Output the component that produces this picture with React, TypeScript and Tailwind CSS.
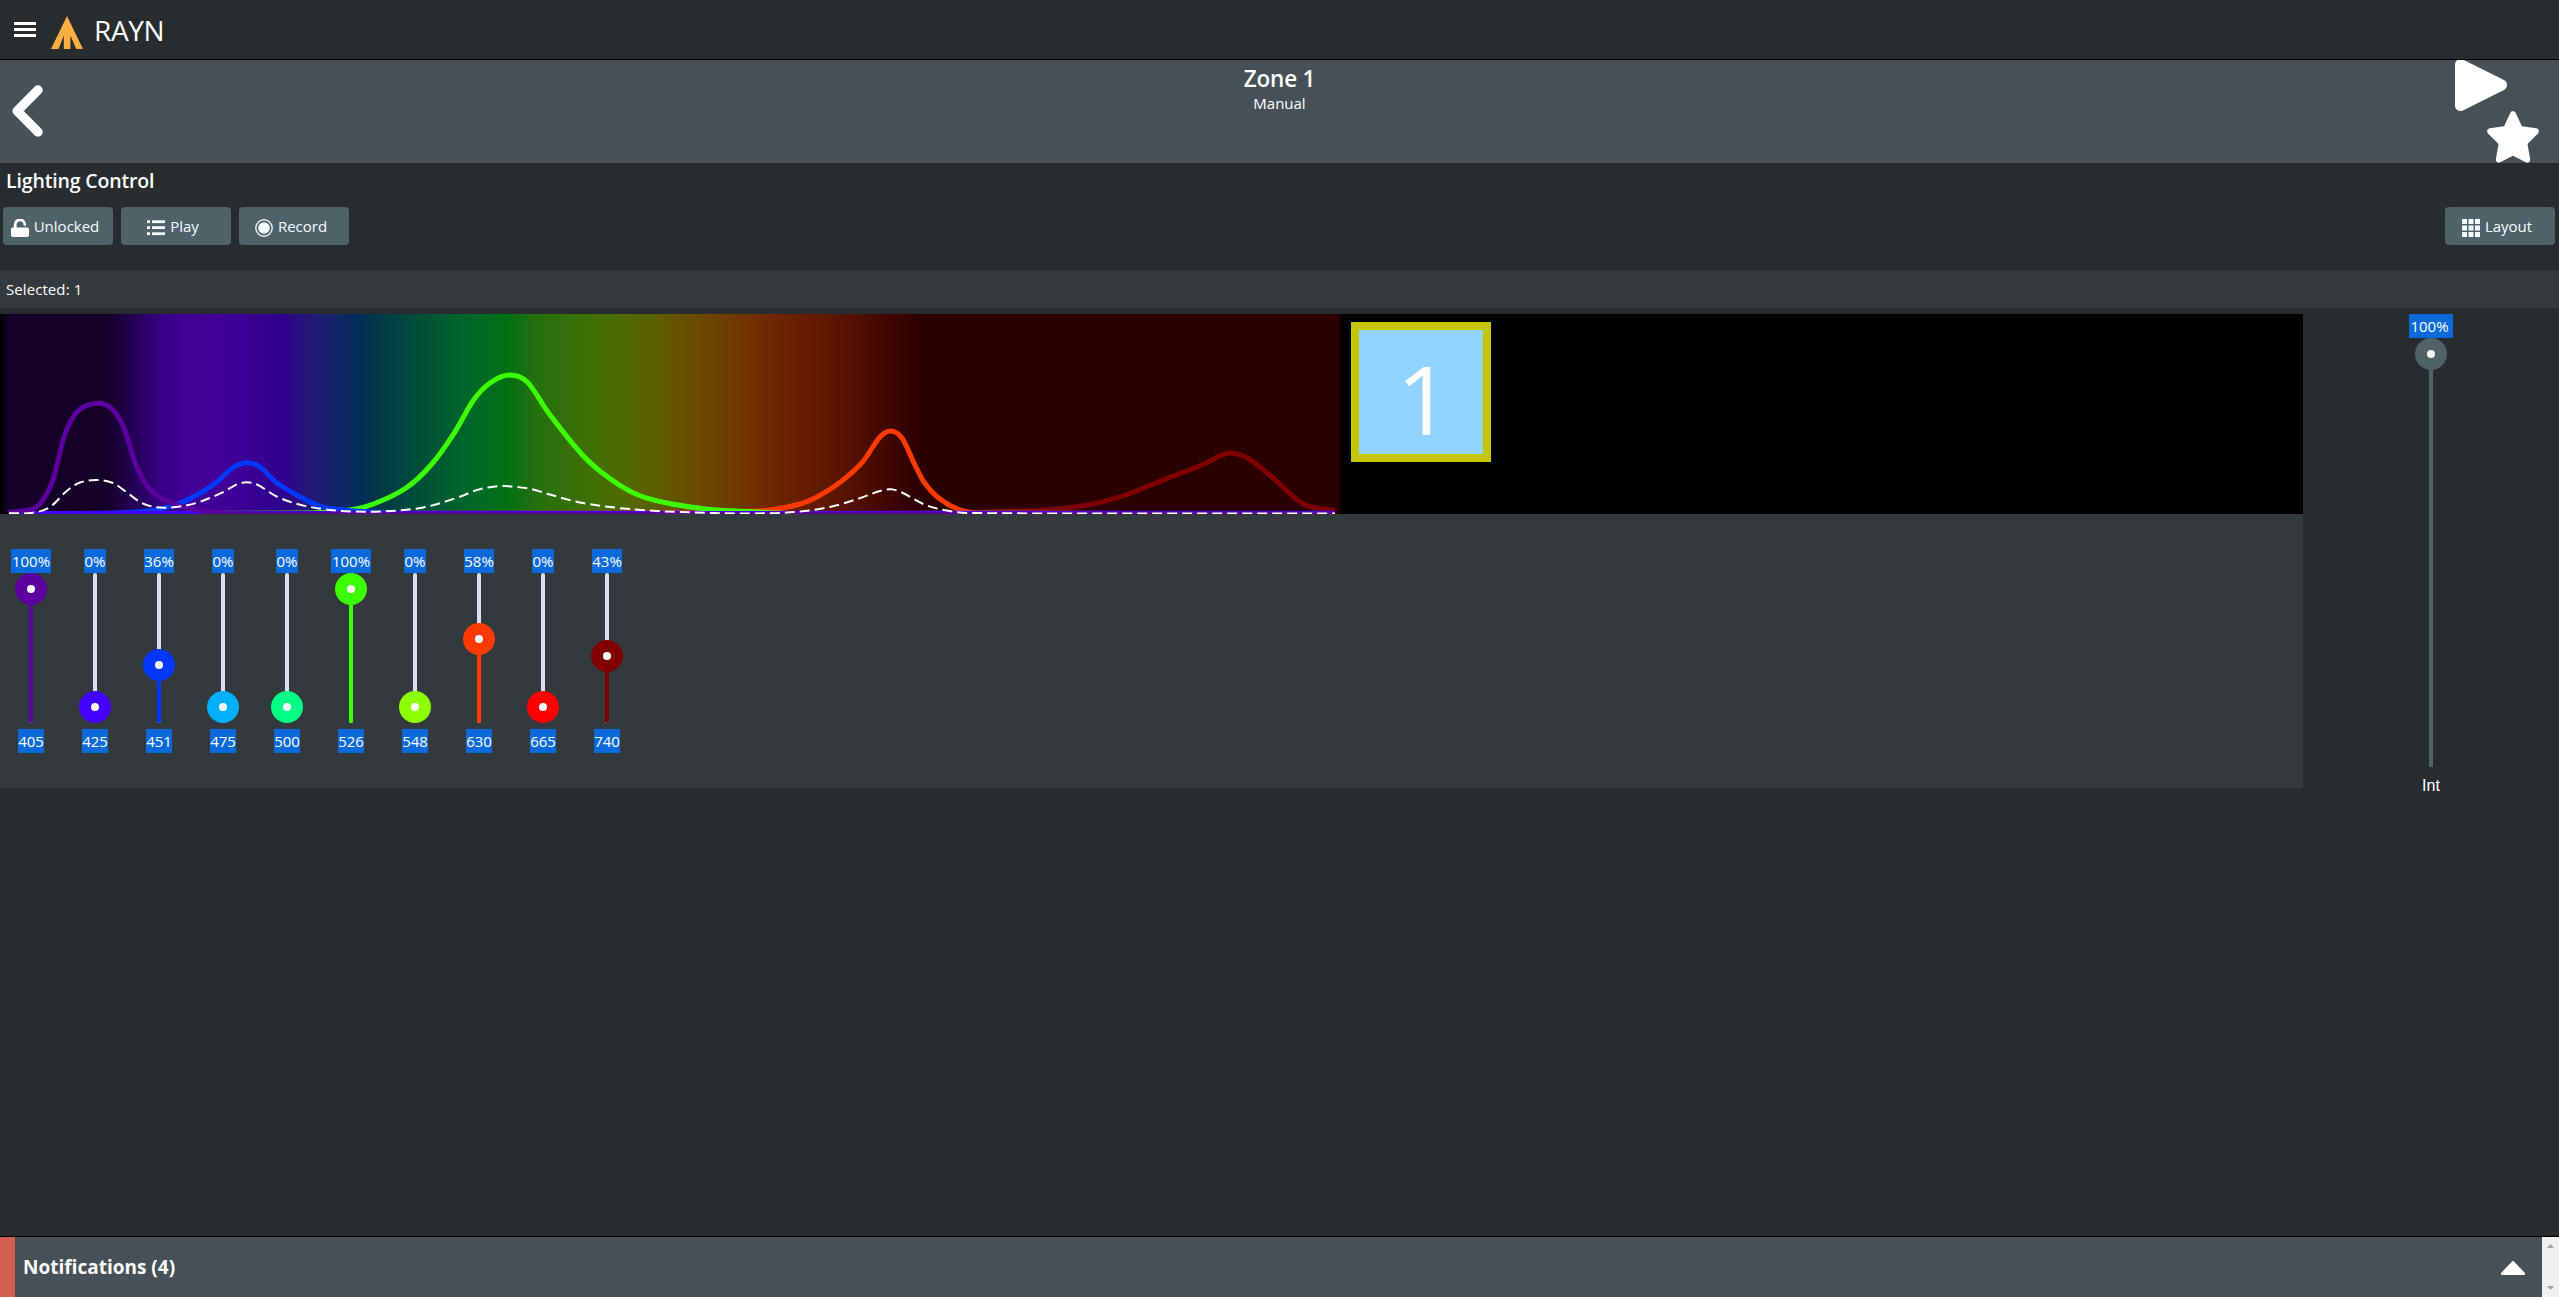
import React from "react";

type Point = [number, number];

/** Smooth open curve through the given points (Catmull-Rom as cubic Béziers). */
function curve(points: Point[]): string {
  let d = `M${points[0][0]},${points[0][1]}`;
  for (let i = 0; i < points.length - 1; i++) {
    const p0 = points[Math.max(i - 1, 0)];
    const p1 = points[i];
    const p2 = points[i + 1];
    const p3 = points[Math.min(i + 2, points.length - 1)];
    const h = (p2[0] - p1[0]) / 3;
    const m1 = p2[0] === p0[0] ? 0 : (p2[1] - p0[1]) / (p2[0] - p0[0]);
    const m2 = p3[0] === p1[0] ? 0 : (p3[1] - p1[1]) / (p3[0] - p1[0]);
    d += `C${p1[0] + h},${p1[1] + m1 * h} ${p2[0] - h},${p2[1] - m2 * h} ${p2[0]},${p2[1]}`;
  }
  return d;
}

const emitters: { color: string; points: Point[] }[] = [
  {
    color: "#800000",
    points: [[8, 199.5], [960, 199], [989, 197.9], [1050, 195.7], [1093, 190], [1130, 179.5], [1163, 166], [1203, 150.5], [1218, 142.8], [1230, 139], [1247, 143.8], [1272, 163], [1300, 188], [1315, 193.8], [1335, 196.5]],
  },
  { color: "#ff0000", points: [[8, 199.5], [1335, 199.5]] },
  {
    color: "#ff3a00",
    points: [[8, 199.5], [700, 199], [735, 197.6], [770, 196], [800, 190], [817, 183], [839.5, 168.7], [862, 148.7], [880, 123], [891, 117], [902, 124], [914, 149], [924, 168], [939, 184.3], [959, 195.5], [979, 198.9], [1335, 199.5]],
  },
  { color: "#8cff00", points: [[8, 199.5], [1335, 199.5]] },
  {
    color: "#3cff00",
    points: [[8, 199.5], [310, 199], [349, 196], [373.5, 190], [406, 174], [431, 151], [454, 119.3], [473.6, 86], [490, 69], [509, 61], [527, 67.7], [548.6, 99], [582.5, 141], [609, 164], [638, 181], [672, 190], [713, 195.7], [749, 197.5], [790, 199.5], [1335, 199.5]],
  },
  { color: "#00ff84", points: [[8, 199.5], [1335, 199.5]] },
  { color: "#00b0ff", points: [[8, 199.5], [1335, 199.5]] },
  {
    color: "#0038ff",
    points: [[8, 199.4], [100, 199.3], [130, 198.3], [155, 196.2], [180, 189], [197, 181], [217, 168], [233, 153.5], [247, 148.7], [260, 153], [277, 169], [310, 188], [327, 194], [360, 197.3], [400, 199.2], [1335, 199.2]],
  },
  { color: "#4400ff", points: [[8, 199.6], [1335, 199.6]] },
  {
    color: "#5c00a0",
    points: [[8, 198.5], [24, 196.8], [35, 194], [43, 186], [53, 166], [65, 120], [78, 97], [97, 89.3], [111.5, 94.5], [124, 114], [136, 151], [150, 175.5], [173, 189.5], [200, 196.5], [240, 199.9], [1335, 199.9]],
  },
];

const combined: Point[] = [
  [9, 199.3], [33, 198.7], [50, 193], [67, 176.7], [80, 168.5], [97, 166], [113, 169], [125, 177], [140, 188], [153, 192.7], [167, 193.7], [187, 191.3], [203, 186.7], [222, 178.7], [237, 170.3], [247, 168.3], [257, 170.5], [277, 182.7], [300, 190.7], [333, 196.3], [370, 197.7], [400, 196.3], [427, 192.7], [460, 182.7], [477, 176], [493, 172.7], [506, 172], [531, 175], [549, 180.3], [584, 189.3], [641, 196], [713, 199], [766, 199.3], [799, 197.7], [831, 192.7], [859, 184.5], [880, 177], [891, 175.2], [902, 178.5], [924, 190.3], [944, 196], [969, 199], [1335, 199.4],
];

const spectrum: [number, string][] = [
  [0, "#000000"], [8, "#150028"], [107, "#150028"], [133, "#250055"], [160, "#370082"],
  [183, "#410096"], [220, "#420098"], [265, "#360093"], [285, "#2e008c"], [295, "#2a0e82"],
  [320, "#1c1c73"], [350, "#0a285e"], [362, "#002e54"], [380, "#003a48"], [420, "#005038"],
  [460, "#00642d"], [485, "#006c22"], [506, "#007014"], [534, "#24700f"], [591, "#3f7005"],
  [627, "#506a00"], [663, "#605a00"], [698, "#6b4a00"], [748, "#733200"], [780, "#6c2400"],
  [813, "#641b00"], [850, "#551100"], [870, "#4a0b00"], [900, "#390300"], [916, "#2d0000"], [1337, "#2d0000"],
  [1343, "#000000"],
];

const sliders = [
  { value: 100, label: "405", color: "#5c00a0" },
  { value: 0, label: "425", color: "#4400ff" },
  { value: 36, label: "451", color: "#0038ff" },
  { value: 0, label: "475", color: "#00b0ff" },
  { value: 0, label: "500", color: "#00ff84" },
  { value: 100, label: "526", color: "#3cff00" },
  { value: 0, label: "548", color: "#8cff00" },
  { value: 58, label: "630", color: "#ff3a00" },
  { value: 0, label: "665", color: "#ff0000" },
  { value: 43, label: "740", color: "#800000" },
];

function Slider({ value, label, color }: { value: number; label: string; color: string }) {
  const top = Math.round((100 - value) * 1.18);
  return (
    <div className="flex w-16 flex-col items-center">
      <span className="bg-[#0a6adb] px-[0.5px] leading-6">{value}%</span>
      <div className="relative flex h-[150px] w-1 flex-col overflow-visible rounded-sm bg-[#d9e0f4]">
        <div className="mt-auto w-1 rounded-b-sm" style={{ height: 134 - top, backgroundColor: color }} />
        <div
          className="absolute -left-[14px] flex size-8 items-center justify-center rounded-full"
          style={{ top, backgroundColor: color }}
        >
          <div className="size-2 rounded-full bg-white" />
        </div>
      </div>
      <span className="mt-1.5 bg-[#0a6adb] leading-6">{label}</span>
    </div>
  );
}

function ToolButton({ icon, children }: { icon: React.ReactNode; children: React.ReactNode }) {
  return (
    <button className="flex h-[38px] w-[110px] items-center justify-center gap-[5px] rounded bg-[#4f6268] pr-[6px] leading-6 text-[#f4fcff]">
      <span className="mt-[4px]">{icon}</span>
      <span className="-mt-px">{children}</span>
    </button>
  );
}

const UnlockIcon = () => (
  <svg width="18" height="18" viewBox="0 0 18 18" fill="white">
    <path d="M4.2 9.5V6A4.8 4.8 0 0 1 13.8 5.3" fill="none" stroke="white" strokeWidth="2.8" strokeLinecap="round" />
    <rect x="0" y="8.6" width="18" height="9.4" rx="1.7" />
  </svg>
);

const ListIcon = () => (
  <svg width="18" height="18" viewBox="0 0 18 18" fill="#f4fcff">
    {[1.3, 7.2, 13.3].map((y) => (
      <g key={y}>
        <rect x="0" y={y} width="3" height="2.8" />
        <rect x="5" y={y} width="13" height="2.8" />
      </g>
    ))}
  </svg>
);

const RecordIcon = () => (
  <svg width="18" height="18" viewBox="0 0 18 18">
    <circle cx="9" cy="9" r="8.2" fill="none" stroke="#e8f1f4" strokeWidth="1.4" />
    <circle cx="9" cy="9" r="5.8" fill="#f4fcff" />
  </svg>
);

const GridIcon = () => (
  <svg width="18" height="18" viewBox="0 0 18 18" fill="#f4fcff">
    {[0, 6.5, 13].map((y) =>
      [0, 6.5, 13].map((x) => <rect key={`${x}-${y}`} x={x} y={y} width="5" height="5" />)
    )}
  </svg>
);

export default function App() {
  return (
    <div
      className="flex h-[1297px] w-[2559px] flex-col overflow-hidden bg-[#282c2f] text-[15px] text-white"
      style={{ fontFamily: '"Open Sans", "Noto Sans", sans-serif' }}
    >
      <header className="flex h-[60px] shrink-0 items-center border-b border-black pl-[14px]">
        <div className="flex w-[22px] flex-col gap-[3px]">
          <div className="h-[3px] bg-white" />
          <div className="h-[3px] bg-white" />
          <div className="h-[3px] bg-white" />
        </div>
        <svg className="mt-[6px] ml-[15px]" width="32" height="33" viewBox="0 0 32 33" fill="#fbae42">
          <path d="M16 0 L32 33 H25.2 L19.4 19.5 V33 H12.8 V19.5 L7.6 33 H0 Z" />
        </svg>
        <span className="ml-[11px] text-[28px] leading-none tracking-[-0.4px]">RAYN</span>
      </header>

      <section className="grid h-[103px] shrink-0 grid-cols-[1fr_auto_1fr] bg-[#485057]">
        <svg className="mt-[25px] ml-[10px]" width="34" height="52" viewBox="0 0 34 52">
          <path d="M28 5 L7.2 26 L28 47" fill="none" stroke="white" strokeWidth="9.5" strokeLinecap="round" strokeLinejoin="round" />
        </svg>
        <div className="flex flex-col items-center pt-[2px]">
          <h1 className="text-[22.5px] font-semibold leading-[33px] tracking-[-0.2px]">Zone 1</h1>
          <p className="-mt-[4px] leading-6">Manual</p>
        </div>
        <div className="mr-5 flex w-[84px] flex-col justify-self-end">
          <svg width="52" height="51" viewBox="0 0 52 51" fill="white" stroke="white" strokeLinejoin="round">
            <path d="M5.5 4.5 V45.5 L46.5 25 Z" strokeWidth="11" />
          </svg>
          <svg className="self-end" width="52" height="52" viewBox="0 0 52 52" fill="white" stroke="white" strokeLinejoin="round">
            <path d="M26 3.2 L32.9 18 L48.8 20.3 L37.3 32 L40.2 48.7 L26 41.4 L11.8 48.7 L14.7 32 L3.2 20.3 L19.1 18 Z" strokeWidth="6" />
          </svg>
        </div>
      </section>

      <h2 className="h-11 shrink-0 pl-[6px] text-[19.5px] font-semibold leading-[35px] tracking-[-0.15px]">Lighting Control</h2>

      <div className="flex h-[63px] shrink-0 items-start gap-2 pr-1 pl-[3px]">
        <ToolButton icon={<UnlockIcon />}>Unlocked</ToolButton>
        <ToolButton icon={<ListIcon />}>Play</ToolButton>
        <ToolButton icon={<RecordIcon />}>Record</ToolButton>
        <div className="ml-auto">
          <ToolButton icon={<GridIcon />}>Layout</ToolButton>
        </div>
      </div>

      <div className="h-[38px] shrink-0 bg-[#34393d] pl-[6px] leading-[38px] tracking-[0.08px]">Selected: 1</div>

      <main className="mt-[6px] flex grow">
        <div className="flex h-[474px] w-[2303px] flex-col bg-[#34393d]">
          <div className="flex h-[200px] bg-black">
            <svg width="1343" height="200" viewBox="0 0 1343 200" className="overflow-hidden">
              <defs>
                <linearGradient id="spectrum" gradientUnits="userSpaceOnUse" x1="0" y1="0" x2="1343" y2="0">
                  {spectrum.map(([x, color]) => (
                    <stop key={x} offset={x / 1343} stopColor={color} />
                  ))}
                </linearGradient>
              </defs>
              <rect width="1343" height="200" fill="url(#spectrum)" />
              {emitters.map((e) => (
                <path key={e.color} d={curve(e.points)} fill="none" stroke={e.color} strokeWidth="5" />
              ))}
              <path d={curve(combined)} fill="none" stroke="white" strokeWidth="2" strokeDasharray="10 5" />
            </svg>
            <div className="m-2 flex size-[140px] items-center justify-center border-8 border-[#c5c500] bg-[#92d2ff] text-[96px] leading-none">
              <span className="mt-[11px] ml-[6px]">1</span>
            </div>
          </div>
          <div className="mt-[35px] ml-[-1px] flex">
            {sliders.map((s) => (
              <Slider key={s.label} {...s} />
            ))}
          </div>
        </div>

        <aside className="flex w-64 flex-col items-center">
          <span className="bg-[#0a6adb] pr-1 pl-px leading-6">100%</span>
          <div className="relative h-[429px] w-1 bg-[#4f6268]">
            <div className="absolute top-0 -left-[14px] flex size-8 items-center justify-center rounded-full bg-[#4f6268]">
              <div className="size-2 rounded-full bg-white" />
            </div>
          </div>
          <span className="mt-[7px] text-[16px] leading-6" style={{ fontFamily: '"Liberation Sans", sans-serif' }}>
            Int
          </span>
        </aside>
      </main>

      <footer className="flex h-[61px] shrink-0 border-t border-black bg-[#485057]">
        <div className="w-[15px] bg-[#d35f50]" />
        <span className="ml-2 text-[19px] font-bold leading-[61px]">Notifications (4)</span>
        <svg className="mt-[22px] mr-4 ml-auto" width="26" height="17" viewBox="0 0 26 17" fill="white" stroke="white" strokeWidth="2" strokeLinejoin="round">
          <path d="M2 14.5 L13 3 L24 14.5 V15 H2 Z" />
        </svg>
        <div className="flex w-[17px] flex-col items-center justify-between bg-[#f0f0f0] py-[7px]">
          <svg width="7" height="4" viewBox="0 0 7 4" fill="#a3a3a3">
            <path d="M3.5 0 L7 4 H0 Z" />
          </svg>
          <svg width="7" height="4" viewBox="0 0 7 4" fill="#a3a3a3">
            <path d="M3.5 4 L7 0 H0 Z" />
          </svg>
        </div>
      </footer>
    </div>
  );
}
